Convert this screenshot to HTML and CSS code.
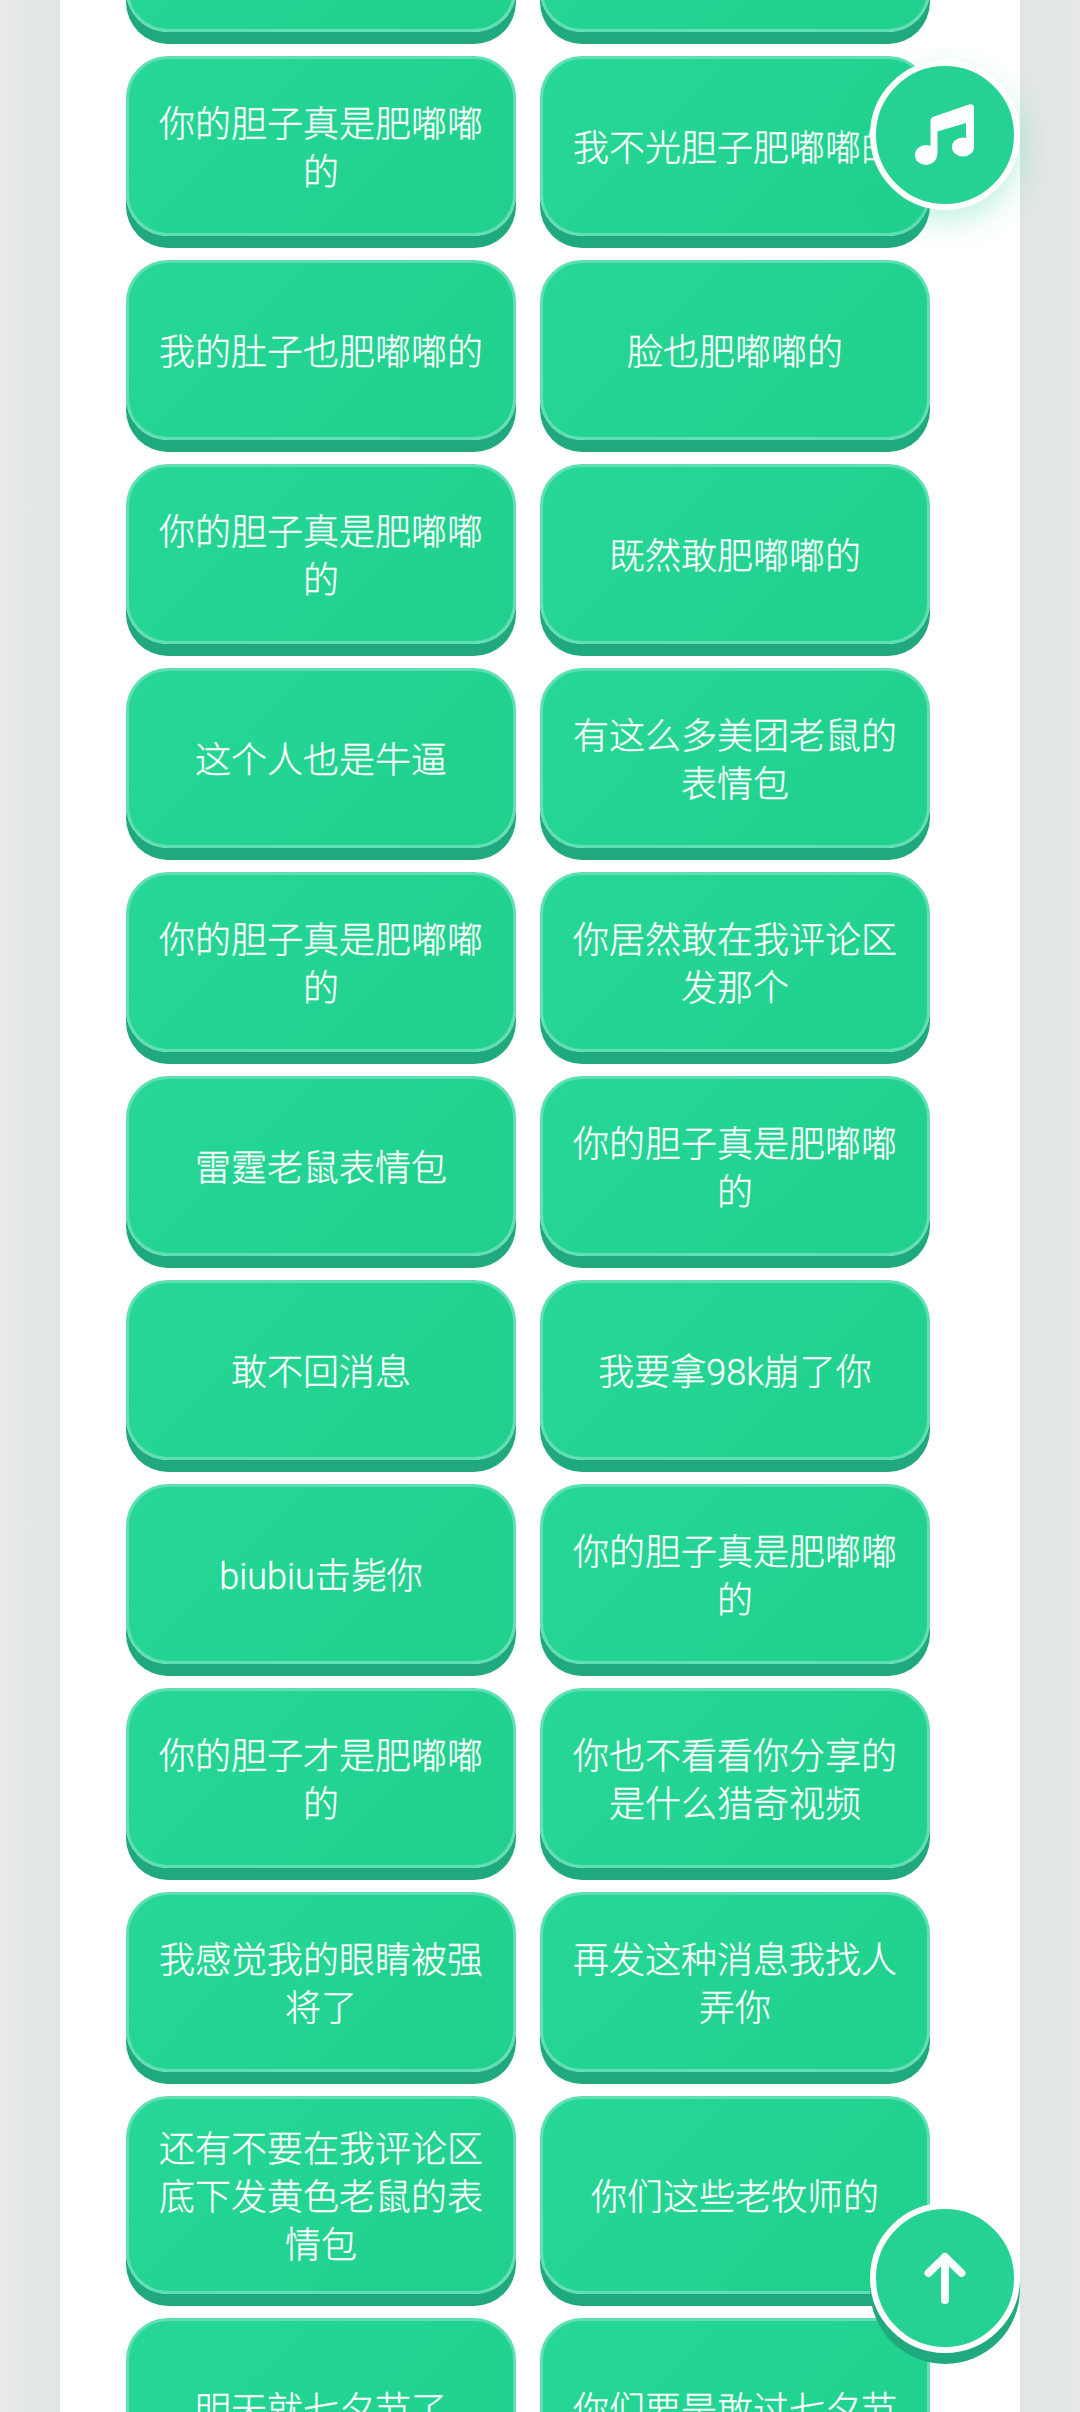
FILE: index.html
```html
<!DOCTYPE html>
<html lang="zh-CN">
<head>
  <meta charset="UTF-8" />
  <meta name="viewport" content="width=device-width, initial-scale=1.0"/>
  <title>语录</title>
  <link rel="stylesheet" href="styles.css">
</head>
<body>
  <main class="panel">
    <div class="btn-list">
      <button class="say-btn"></button>
      <button class="say-btn"></button>
      <button class="say-btn">你的胆子真是肥嘟嘟的</button>
      <button class="say-btn">我不光胆子肥嘟嘟的</button>
      <button class="say-btn">我的肚子也肥嘟嘟的</button>
      <button class="say-btn">脸也肥嘟嘟的</button>
      <button class="say-btn">你的胆子真是肥嘟嘟的</button>
      <button class="say-btn">既然敢肥嘟嘟的</button>
      <button class="say-btn">这个人也是牛逼</button>
      <button class="say-btn">有这么多美团老鼠的表情包</button>
      <button class="say-btn">你的胆子真是肥嘟嘟的</button>
      <button class="say-btn">你居然敢在我评论区发那个</button>
      <button class="say-btn">雷霆老鼠表情包</button>
      <button class="say-btn">你的胆子真是肥嘟嘟的</button>
      <button class="say-btn">敢不回消息</button>
      <button class="say-btn">我要拿98k崩了你</button>
      <button class="say-btn">biubiu击毙你</button>
      <button class="say-btn">你的胆子真是肥嘟嘟的</button>
      <button class="say-btn">你的胆子才是肥嘟嘟的</button>
      <button class="say-btn">你也不看看你分享的是什么猎奇视频</button>
      <button class="say-btn">我感觉我的眼睛被强将了</button>
      <button class="say-btn">再发这种消息我找人弄你</button>
      <button class="say-btn">还有不要在我评论区底下发黄色老鼠的表情包</button>
      <button class="say-btn">你们这些老牧师的</button>
      <button class="say-btn">明天就七夕节了</button>
      <button class="say-btn">你们要是敢过七夕节</button>
    </div>
  </main>

  <button class="float-btn music-btn" aria-label="音乐">
    <svg class="music-icon" viewBox="0 0 90 90">
      <path d="M30.5 31Q30.5 27.5 34 26.5L69 14.5Q74 13.5 74 18V57H66V33L37.5 41.5V65H30.5Z"/>
      <ellipse cx="26" cy="65" rx="11" ry="10"/>
      <ellipse cx="63" cy="57" rx="11" ry="9.5"/>
    </svg>
  </button>
  <button class="float-btn top-btn" aria-label="返回顶部">
    <svg class="top-icon" viewBox="0 0 80 80">
      <path d="M23.5 35L40 19L56.5 35M40 19V62"/>
    </svg>
  </button>
</body>
</html>
```

FILE: styles.css
```css
html, body {
  height: 100%;
  margin: 0;
  overflow: hidden;
}
body {
  background: linear-gradient(90deg, #e8ebea 0, #dfe6e4 60px, #dfe6e4 1020px, #e6e9e8 1080px);
  font-family: Roboto, "Noto Sans CJK SC", sans-serif;
}
.panel {
  display: flow-root;
  background: #fff;
  margin: 0 60px;
  padding: 0 90px 0 66px;
  height: 100%;
}
.btn-list {
  display: grid;
  grid-template-columns: 390px 390px;
  column-gap: 24px;
  row-gap: 24px;
  margin-top: -148px;
}
.say-btn {
  box-sizing: border-box;
  min-height: 180px;
  padding: 27px 30px 21px;
  margin: 0;
  border: 3px solid #5fdfb3;
  border-radius: 42px;
  background: linear-gradient(135deg, #26d797, #20d08c);
  box-shadow: 0 12px 0 #20a97f;
  color: #fff;
  font-family: inherit;
  font-size: 36px;
  font-weight: 300;
  line-height: 48px;
  text-align: center;
  -webkit-text-stroke: 0.3px #fff;
}
.float-btn {
  position: fixed;
  right: 60px;
  box-sizing: border-box;
  width: 150px;
  height: 150px;
  padding: 0;
  display: flex;
  align-items: center;
  justify-content: center;
  border: 6px solid #fff;
  border-radius: 50%;
  background: #25d294;
}
.music-btn {
  top: 60px;
  box-shadow: 0 12px 30px rgba(37, 210, 148, 0.28);
}
.top-btn {
  top: 2203px;
  box-shadow: 0 11px 0 #20a97f;
}
.music-icon {
  width: 90px;
  height: 90px;
  fill: #fff;
}
.top-icon {
  width: 80px;
  height: 80px;
  fill: none;
  stroke: #fff;
  stroke-width: 8;
  stroke-linecap: round;
  stroke-linejoin: round;
}
```
